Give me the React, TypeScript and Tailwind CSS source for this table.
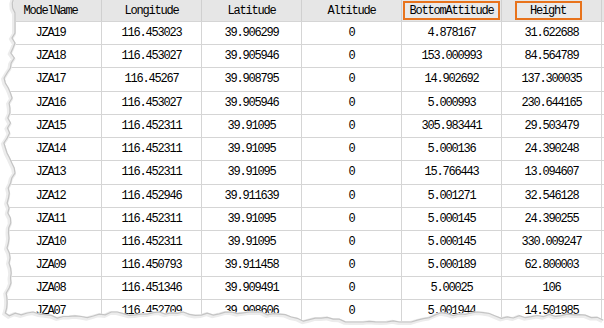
import React from "react";

const columns = ["ModelName", "Longitude", "Latitude", "Altitude", "BottomAttitude", "Height"];

const rows: string[][] = [
  ["JZA19", "116.453023", "39.906299", "0", "4.878167", "31.622688"],
  ["JZA18", "116.453027", "39.905946", "0", "153.000993", "84.564789"],
  ["JZA17", "116.45267", "39.908795", "0", "14.902692", "137.300035"],
  ["JZA16", "116.453027", "39.905946", "0", "5.000993", "230.644165"],
  ["JZA15", "116.452311", "39.91095", "0", "305.983441", "29.503479"],
  ["JZA14", "116.452311", "39.91095", "0", "5.000136", "24.390248"],
  ["JZA13", "116.452311", "39.91095", "0", "15.766443", "13.094607"],
  ["JZA12", "116.452946", "39.911639", "0", "5.001271", "32.546128"],
  ["JZA11", "116.452311", "39.91095", "0", "5.000145", "24.390255"],
  ["JZA10", "116.452311", "39.91095", "0", "5.000145", "330.009247"],
  ["JZA09", "116.450793", "39.911458", "0", "5.000189", "62.800003"],
  ["JZA08", "116.451346", "39.909491", "0", "5.00025", "106"],
  ["JZA07", "116.452709", "39.908606", "0", "5.001944", "14.501985"],
];

// rows are ~23.2px tall in the capture, so mix 23 and 24
const tall = [2, 6];

// small seeded random so the torn edge is the same every render
function rng(seed: number) {
  let s = seed;
  return () => {
    s = (s * 1103515245 + 12345) % 2147483648;
    return s / 2147483648;
  };
}

function tornEdge() {
  const r = rng(7);
  const pts: [number, number][] = [];
  let x = 13;
  for (let y = -2; y <= 314; y += 5) {
    x = Math.max(1, Math.min(15, x + (r() - 0.5) * 7));
    pts.push([x, y]);
  }
  let y = 316;
  for (let px = pts[pts.length - 1][0] + 4; px <= 608; px += 6) {
    y = Math.max(312, Math.min(322, y + (r() - 0.5) * 6));
    pts.push([px, y]);
  }
  return pts;
}

function TornOverlay() {
  const pts = tornEdge();
  const line = pts.map(([x, y], i) => `${i ? "L" : "M"}${x.toFixed(1)} ${y.toFixed(1)}`).join(" ");
  const fill = `M-2 -2 ${line.replace(/^M/, "L")} L606 330 L-2 330 Z`;
  return (
    <svg className="pointer-events-none absolute inset-0" width={604} height={328}>
      <path d={fill} fill="#ffffff" />
      <path d={line} fill="none" stroke="#ececec" strokeWidth={4} transform="translate(-1 1)" />
      <path d={line} fill="none" stroke="#c4c4c4" strokeWidth={1.2} />
    </svg>
  );
}

export default function App() {
  return (
    <div className="relative h-[328px] w-[604px] overflow-hidden bg-white font-['Liberation_Mono',monospace] text-[12px] tracking-[-1.2px] text-black">
      <div className="grid h-[22px] grid-cols-[102px_100px_100px_100px_100px_100px] border-b border-[#d5d5d5] bg-[#e6e6e6]">
        {columns.map((c) => (
          <div key={c} className="flex items-center justify-center border-r border-[#d0d0d0]">
            {c === "BottomAttitude" ? (
              <span className="flex h-[19px] w-[97px] items-center justify-center border-2 border-[#e8731c] bg-[#e9e9e9]">
                {c}
              </span>
            ) : c === "Height" ? (
              <span className="-ml-[7px] flex h-[19px] w-[67px] items-center justify-center border-2 border-[#e8731c] bg-[#e9e9e9]">
                {c}
              </span>
            ) : (
              c
            )}
          </div>
        ))}
      </div>
      {rows.map((r, i) => (
        <div
          key={r[0]}
          className={`grid grid-cols-[102px_100px_100px_100px_100px_100px] border-b border-[#d5d5d5] ${
            tall.includes(i) ? "h-[24px]" : "h-[23px]"
          }`}
        >
          {r.map((v, j) => (
            <div key={j} className="flex items-center justify-center border-r border-[#d5d5d5] pb-[1px]">
              {v}
            </div>
          ))}
        </div>
      ))}
      <TornOverlay />
    </div>
  );
}
